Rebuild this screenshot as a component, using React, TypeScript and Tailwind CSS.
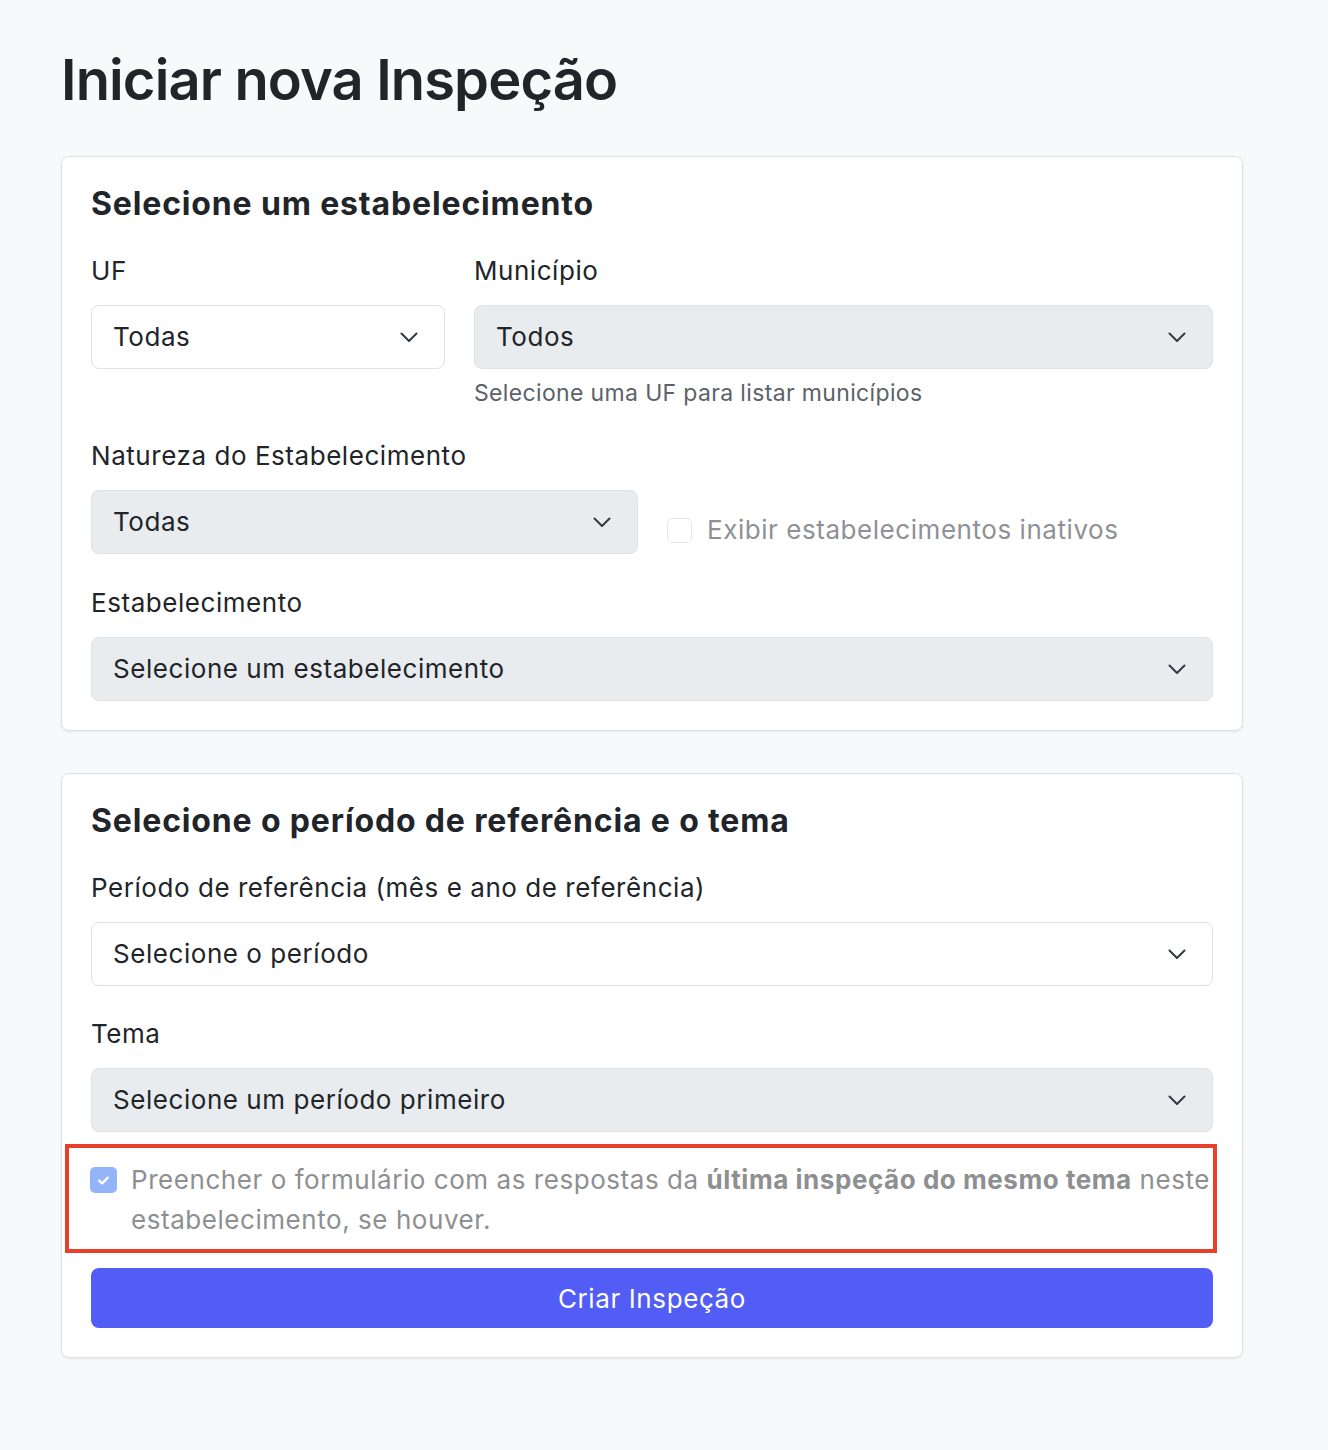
import React from 'react';

const font = { fontFamily: 'Inter, "Noto Sans", sans-serif' };

function Chevron() {
  return (
    <svg width="18" height="10" viewBox="0 0 18 10" fill="none" className="shrink-0">
      <path d="M1.5 1.5l7.5 7.5 7.5-7.5" stroke="#343a40" strokeWidth="2" strokeLinecap="round" strokeLinejoin="round" />
    </svg>
  );
}

function FakeSelect({ value, disabled = false }: { value: string; disabled?: boolean }) {
  return (
    <div
      className={`flex h-16 w-full items-center justify-between rounded-lg border border-[#dee2e6] pl-[21px] pr-[26px] text-[26px] leading-9 tracking-[0.55px] text-[#212529] ${
        disabled ? 'bg-[#e9ecef]' : 'bg-white'
      }`}
    >
      <span>{value}</span>
      <Chevron />
    </div>
  );
}

function Label({ children }: { children: React.ReactNode }) {
  return <div className="mb-4 text-[26px] leading-9 tracking-[0.55px] text-[#212529]">{children}</div>;
}

function Card({ title, children }: { title: string; children: React.ReactNode }) {
  return (
    <section className="rounded-lg border border-[#dfe2e6] bg-white p-[29px] shadow-[0_1px_3px_rgba(0,0,0,0.08)]">
      <h2 className="text-[32px] font-bold leading-9 tracking-[0.85px] text-[#212529]">{title}</h2>
      {children}
    </section>
  );
}

export default function App() {
  return (
    <div style={font} className="min-h-[1450px] bg-[#f8f9fa] pb-20 pl-[61px] pr-[85px] pt-[47px]">
      <h1 className="text-[56px] font-semibold leading-[67px] tracking-[-0.85px] text-[#212529]">
        Iniciar nova Inspeção
      </h1>

      <div className="mt-[42px] flex flex-col gap-[42px]">
        <Card title="Selecione um estabelecimento">
          <div className="mt-[31px] grid grid-cols-[354px_1fr] gap-[29px]">
            <div>
              <Label>UF</Label>
              <FakeSelect value="Todas" />
            </div>
            <div>
              <Label>Município</Label>
              <FakeSelect value="Todos" disabled />
              <p className="mt-[9px] text-[23px] leading-[30px] tracking-[0.35px] text-[#5c6268]">
                Selecione uma UF para listar municípios
              </p>
            </div>
          </div>

          <div className="mt-[30px]">
            <Label>Natureza do Estabelecimento</Label>
            <div className="flex items-center gap-[29px]">
              <div className="w-[547px]">
                <FakeSelect value="Todas" disabled />
              </div>
              <label className="flex items-center gap-[15px] pt-4 text-[26px] leading-9 tracking-[0.55px] text-[#8e9196]">
                <span className="h-[25px] w-[25px] rounded-[5px] border border-[#e6e8eb] bg-white" />
                Exibir estabelecimentos inativos
              </label>
            </div>
          </div>

          <div className="mt-[31px]">
            <Label>Estabelecimento</Label>
            <FakeSelect value="Selecione um estabelecimento" disabled />
          </div>
        </Card>

        <Card title="Selecione o período de referência e o tema">
          <div className="mt-[31px]">
            <Label>Período de referência (mês e ano de referência)</Label>
            <FakeSelect value="Selecione o período" />
          </div>

          <div className="mt-[30px]">
            <Label>Tema</Label>
            <FakeSelect value="Selecione um período primeiro" disabled />
          </div>

          <div className="-ml-[26px] -mr-[4px] mt-3 border-[4px] border-[#e8402a] pb-[9px] pl-[21px] pt-3">
            <div className="flex items-start gap-[14px]">
              <span className="mt-[7px] flex h-[26px] w-[27px] shrink-0 items-center justify-center rounded-[5px] bg-[#94b4fa]">
                <svg width="15" height="15" viewBox="0 0 14 14" fill="none">
                  <path d="M3 7.2l2.6 2.6L11 4.4" stroke="white" strokeWidth="2.3" strokeLinecap="round" strokeLinejoin="round" />
                </svg>
              </span>
              <p className="text-[26px] leading-10 tracking-[0.55px] text-[#8d8f91]">
                <span className="whitespace-nowrap">
                  Preencher o formulário com as respostas da <b className="font-bold">última inspeção do mesmo tema</b> neste
                </span>
                <br />
                estabelecimento, se houver.
              </p>
            </div>
          </div>

          <button className="mt-[15px] flex h-[60px] w-full items-center justify-center rounded-lg bg-[#525df5] text-[26px] tracking-[0.6px] text-white">
            Criar Inspeção
          </button>
        </Card>
      </div>
    </div>
  );
}
